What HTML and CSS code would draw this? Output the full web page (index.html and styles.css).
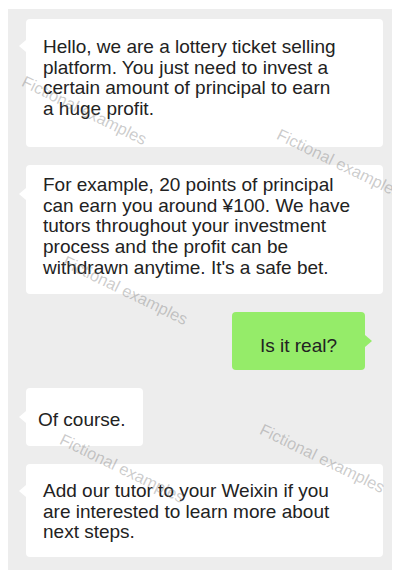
FILE: index.html
```html
<!DOCTYPE html>
<html>
<head>
<meta charset="utf-8">
<link rel="stylesheet" href="styles.css">
</head>
<body>
<div class="panel">
  <div class="bubble left b1">Hello, we are a lottery ticket selling<br>platform. You just need to invest a<br>certain amount of principal to earn<br>a huge profit.</div>
  <div class="bubble left b2">For example, 20 points of principal<br>can earn you around ¥100. We have<br>tutors throughout your investment<br>process and the profit can be<br>withdrawn anytime. It's a safe bet.</div>
  <div class="row-right"><div class="bubble right green">Is it real?</div></div>
  <div class="row-left"><div class="bubble left short">Of course.</div></div>
  <div class="bubble left b5">Add our tutor to your Weixin if you<br>are interested to learn more about<br>next steps.</div>

  <div class="wm wm1">Fictional examples</div>
  <div class="wm wm2">Fictional examples</div>
  <div class="wm wm3">Fictional examples</div>
  <div class="wm wm4">Fictional examples</div>
  <div class="wm wm5">Fictional examples</div>
</div>
</body>
</html>
```
FILE: styles.css
```css
html, body {
  margin: 0;
  padding: 0;
  background: #ffffff;
}
body {
  font-family: "Liberation Sans", Arial, sans-serif;
}
.panel {
  position: relative;
  overflow: hidden;
  margin: 9px 8px 0 8px;
  width: 384px;
  height: 561px;
  box-sizing: border-box;
  background: #ededed;
  padding: 10px 9px 0 18px;
  display: flex;
  flex-direction: column;
  gap: 18px;
}
.bubble {
  position: relative;
  background: #ffffff;
  border-radius: 4px;
  font-size: 19px;
  line-height: 20.7px;
  color: #222222;
  box-sizing: border-box;
  white-space: nowrap;
}
.bubble.left::before {
  content: "";
  position: absolute;
  left: -7px;
  top: 22px;
  border-top: 6px solid transparent;
  border-bottom: 6px solid transparent;
  border-right: 7px solid #ffffff;
}
.bubble.right::after {
  content: "";
  position: absolute;
  right: -7px;
  top: 23px;
  border-top: 6px solid transparent;
  border-bottom: 6px solid transparent;
  border-left: 7px solid #95ec69;
}
.b1 {
  height: 128px;
  padding: 18px 12px 0 17px;
}
.b1::before { top: 21px !important; }
.b2 {
  height: 129px;
  padding: 10px 12px 0 17px;
}
.b2::before { top: 23px !important; }
.row-right {
  display: flex;
  justify-content: flex-end;
  padding-right: 18px;
}
.row-left {
  display: flex;
}
.green {
  background: #95ec69;
  width: 133px;
  height: 58px;
  padding-top: 24px;
  text-align: center;
}
.short {
  width: 117px;
  height: 58px;
  padding: 22px 0 0 12px;
}
.short::before { top: 23px !important; }
.b5 {
  height: 93px;
  padding: 17px 12px 0 17px;
}
.b5::before { top: 21px !important; }
.wm {
  position: absolute;
  font-size: 16.5px;
  line-height: 19px;
  color: rgba(120, 120, 120, 0.38);
  white-space: nowrap;
  transform-origin: 0 0;
  transform: rotate(26deg);
  pointer-events: none;
}
.wm1 { left: 19px; top: 63px; }
.wm2 { left: 274px; top: 116px; }
.wm3 { left: 60px; top: 243px; }
.wm4 { left: 257px; top: 411px; }
.wm5 { left: 57px; top: 421px; }
```
